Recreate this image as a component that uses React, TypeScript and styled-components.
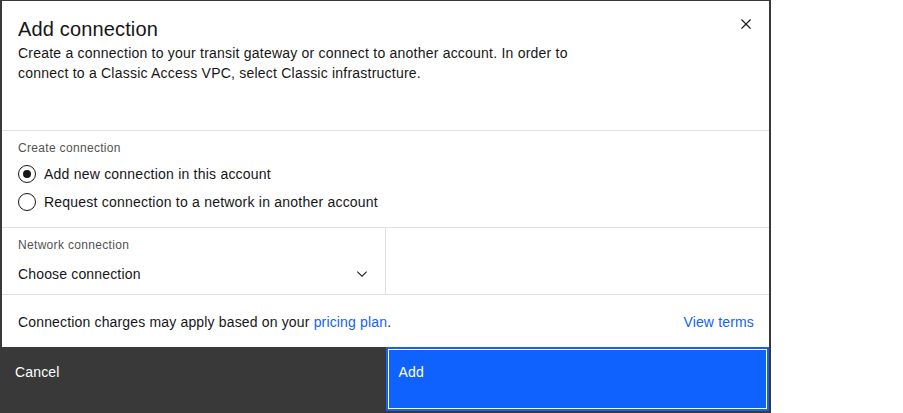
import React from "react";
import styled, { createGlobalStyle } from "styled-components";

const GlobalStyle = createGlobalStyle`
  html, body { margin: 0; padding: 0; background: #ffffff; }
  body { font-family: "Liberation Sans", Arial, sans-serif; color: #161616; }
  * { box-sizing: border-box; }
`;

const Dialog = styled.div`
  width: 771px;
  height: 413px;
  border-style: solid;
  border-color: #393939;
  border-width: 1px 2px 2px 2px;
  background: #ffffff;
  display: flex;
  flex-direction: column;
`;

const Header = styled.div`
  display: flex;
  align-items: flex-start;
  padding-bottom: 47px;
`;

const TitleBlock = styled.div`
  flex: 1;
  padding: 14px 0 0 16px;
`;

const Title = styled.h2`
  margin: 0;
  font-size: 20px;
  line-height: 28px;
  font-weight: 400;
  letter-spacing: 0.15px;
  color: #161616;
`;

const Description = styled.p`
  margin: 0;
  max-width: 590px;
  font-size: 14px;
  line-height: 20px;
  letter-spacing: 0.22px;
  color: #161616;
`;

const CloseButton = styled.button`
  flex: none;
  width: 46px;
  height: 46px;
  border: none;
  background: transparent;
  padding: 0;
  display: flex;
  align-items: center;
  justify-content: center;
  cursor: pointer;
  color: #161616;
`;

const Section = styled.div`
  border-top: 1px solid #e0e0e0;
  padding: 9px 16px 15px 16px;
`;

const FieldLabel = styled.div<{ $gap: number }>`
  font-size: 12px;
  line-height: 16px;
  letter-spacing: 0.32px;
  color: #525252;
  margin-bottom: ${(p) => p.$gap}px;
`;

const RadioGroup = styled.div`
  display: flex;
  flex-direction: column;
  gap: 8px;
`;

const RadioRow = styled.label`
  display: flex;
  align-items: center;
  gap: 8px;
  height: 20px;
  font-size: 14px;
  line-height: 20px;
  letter-spacing: 0.22px;
  color: #161616;
`;

const RadioCircle = styled.span<{ $checked?: boolean }>`
  width: 18px;
  height: 18px;
  border-radius: 50%;
  border: 1px solid #161616;
  display: flex;
  align-items: center;
  justify-content: center;
  &::after {
    content: "";
    width: 8px;
    height: 8px;
    border-radius: 50%;
    background: ${(p) => (p.$checked ? "#161616" : "transparent")};
  }
`;

const GridRow = styled.div`
  border-top: 1px solid #e0e0e0;
  display: grid;
  grid-template-columns: 384px 1fr;
`;

const Cell = styled.div`
  border-right: 1px solid #e0e0e0;
  padding-top: 9px;
`;

const CellLabel = styled(FieldLabel)`
  padding-left: 16px;
`;

const Select = styled.div`
  height: 40px;
  display: flex;
  align-items: center;
  justify-content: space-between;
  padding: 0 15px 0 16px;
  font-size: 14px;
  line-height: 20px;
  letter-spacing: 0.16px;
  color: #161616;
`;

const InfoRow = styled.div`
  border-top: 1px solid #e0e0e0;
  display: flex;
  justify-content: space-between;
  align-items: flex-start;
  padding: 17px 15px 15px 16px;
  font-size: 14px;
  line-height: 20px;
  letter-spacing: 0.16px;
  color: #161616;
`;

const Link = styled.a`
  color: #0f62fe;
  text-decoration: none;
`;

const Footer = styled.div`
  margin-top: auto;
  height: 64px;
  display: grid;
  grid-template-columns: 1fr 1fr;
`;

const FooterButton = styled.button<{ $kind: "secondary" | "primary" }>`
  height: 64px;
  margin: 0;
  text-align: left;
  display: flex;
  align-items: flex-start;
  padding: 15px 12px 0 12px;
  font-family: "Liberation Sans", Arial, sans-serif;
  font-size: 14px;
  line-height: 18px;
  letter-spacing: 0.16px;
  color: #ffffff;
  cursor: pointer;
  border: 1px solid ${(p) => (p.$kind === "primary" ? "#0f62fe" : "transparent")};
  background: ${(p) => (p.$kind === "primary" ? "#0f62fe" : "#393939")};
  box-shadow: ${(p) =>
    p.$kind === "primary"
      ? "inset 0 0 0 1px #0f62fe, inset 0 0 0 2px #ffffff"
      : "none"};
`;

const CloseIcon = () => (
  <svg width="20" height="20" viewBox="0 0 32 32" fill="currentColor">
    <path d="M24 9.4L22.6 8 16 14.6 9.4 8 8 9.4 14.6 16 8 22.6 9.4 24 16 17.4 22.6 24 24 22.6 17.4 16 24 9.4z" />
  </svg>
);

const ChevronIcon = () => (
  <svg width="16" height="16" viewBox="0 0 16 16" fill="#161616">
    <path d="M8 11L3 6 3.7 5.3 8 9.6 12.3 5.3 13 6z" />
  </svg>
);

export default function App() {
  return (
    <>
      <GlobalStyle />
      <Dialog>
        <Header>
          <TitleBlock>
            <Title>Add connection</Title>
            <Description>
              Create a connection to your transit gateway or connect to another
              account. In order to connect to a Classic Access VPC, select
              Classic infrastructure.
            </Description>
          </TitleBlock>
          <CloseButton aria-label="Close">
            <CloseIcon />
          </CloseButton>
        </Header>

        <Section>
          <FieldLabel $gap={8}>Create connection</FieldLabel>
          <RadioGroup>
            <RadioRow>
              <RadioCircle $checked />
              Add new connection in this account
            </RadioRow>
            <RadioRow>
              <RadioCircle />
              Request connection to a network in another account
            </RadioRow>
          </RadioGroup>
        </Section>

        <GridRow>
          <Cell>
            <CellLabel $gap={1}>Network connection</CellLabel>
            <Select>
              <span>Choose connection</span>
              <ChevronIcon />
            </Select>
          </Cell>
          <div />
        </GridRow>

        <InfoRow>
          <span>
            Connection charges may apply based on your{" "}
            <Link href="#">pricing plan</Link>.
          </span>
          <Link href="#">View terms</Link>
        </InfoRow>

        <Footer>
          <FooterButton $kind="secondary">Cancel</FooterButton>
          <FooterButton $kind="primary">Add</FooterButton>
        </Footer>
      </Dialog>
    </>
  );
}
